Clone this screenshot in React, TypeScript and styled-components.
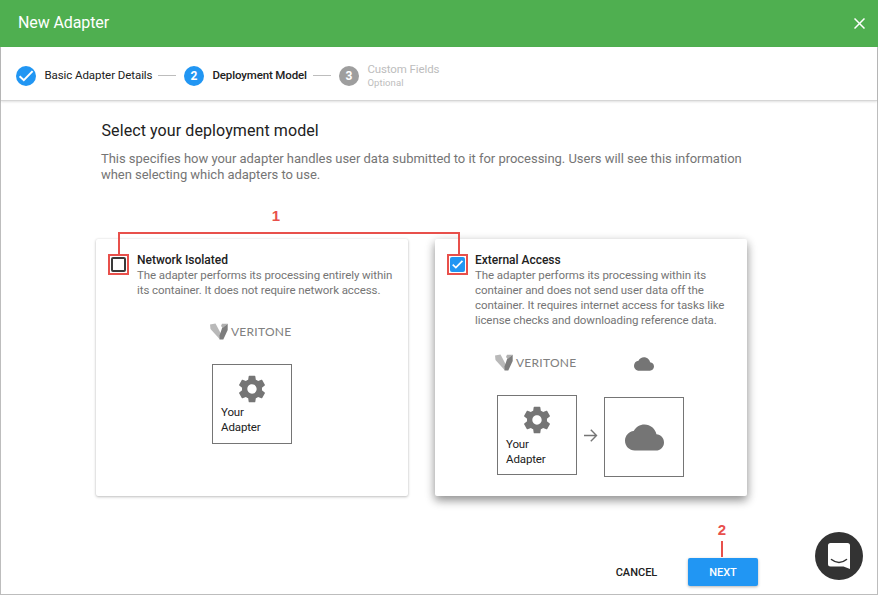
import React from 'react';
import styled, { createGlobalStyle } from 'styled-components';

const GlobalStyle = createGlobalStyle`
  *, *::before, *::after { box-sizing: border-box; }
  body { margin: 0; background: #fff; font-family: Roboto, "Liberation Sans", sans-serif; }
`;

const GREY = '#757575';
const BLUE = '#2196f3';
const RED = '#e8504b';

const Page = styled.div`
  width: 878px;
  height: 595px;
  display: flex;
  flex-direction: column;
  position: relative;
  overflow: hidden;
`;

const Header = styled.header`
  height: 47px;
  flex: none;
  padding: 0 13px 2px 18px;
  display: flex;
  align-items: center;
  justify-content: space-between;
  background: #4faf50;
  color: #fff;
  font-size: 16px;
  letter-spacing: -0.1px;
`;

const CloseButton = styled.button`
  width: 11px;
  height: 11px;
  padding: 0;
  border: 0;
  background: none;
  display: flex;
  margin-top: 2px;
`;

const Body = styled.div`
  flex: 1;
  display: flex;
  flex-direction: column;
  border: 1px solid #bdbdbd;
  border-top: 0;
`;

const Stepper = styled.nav`
  height: 54px;
  flex: none;
  display: flex;
  align-items: center;
  padding: 4px 0 0 15px;
  border-bottom: 1px solid #d6d6d6;
  box-shadow: 0 1px 2px rgba(0, 0, 0, 0.12);
`;

const StepDot = styled.span<{ $muted?: boolean }>`
  width: 20px;
  height: 20px;
  flex: none;
  border-radius: 50%;
  background: ${p => (p.$muted ? '#9e9e9e' : BLUE)};
  color: #fff;
  font-size: 12px;
  font-weight: 700;
  display: flex;
  align-items: center;
  justify-content: center;
`;

const StepLabel = styled.span<{ $w: number; $weight?: number; $ls: number }>`
  width: ${p => p.$w}px;
  margin-left: 8px;
  margin-top: -1px;
  padding-left: 0.4px;
  white-space: nowrap;
  font-size: 11.5px;
  line-height: 14px;
  font-weight: ${p => p.$weight || 400};
  letter-spacing: ${p => p.$ls}px;
  color: #212121;
`;

const StepMuted = styled(StepLabel)`
  color: #bdbdbd;
  margin-top: -1px;
  small { display: block; font-size: 9.5px; line-height: 13px; letter-spacing: 0.1px; }
`;

const StepLine = styled.i`
  width: 18px;
  height: 1px;
  margin: 0 8px 0 6px;
  background: #bdbdbd;
`;

const Main = styled.main`
  flex: 1;
  display: flex;
  flex-direction: column;
  padding: 20px 0 0 95px;
`;

const Title = styled.h1`
  margin: 0 0 0 5.5px;
  font-size: 16px;
  line-height: 20px;
  font-weight: 400;
  letter-spacing: 0.09px;
  color: #212121;
`;

const Intro = styled.p`
  margin: 10px 0 0 5px;
  font-size: 13px;
  line-height: 16px;
  letter-spacing: -0.03px;
  color: ${GREY};
  white-space: nowrap;
`;

const Cards = styled.section`
  margin-top: 56px;
  display: flex;
  gap: 27px;
  position: relative;
`;

const Card = styled.article<{ $raised?: boolean }>`
  width: 312px;
  height: 257px;
  padding: 13px 12px 0;
  background: #fff;
  border-radius: 2px;
  box-shadow: ${p => p.$raised
    ? '0 4px 8px rgba(0,0,0,.3), 0 4px 12px rgba(0,0,0,.2)'
    : '0 1px 3px rgba(0,0,0,.24), 0 0 2px rgba(0,0,0,.1)'};
`;

const CardTop = styled.div<{ $gap: number; $h: number }>`
  display: flex;
  gap: ${p => p.$gap}px;
  height: ${p => p.$h}px;
`;

const CheckFrame = styled.span`
  width: 21px;
  height: 21px;
  flex: none;
  margin-top: 2px;
  border: 2px solid ${RED};
  display: flex;
  align-items: center;
  justify-content: center;
`;

const CheckBox = styled.span<{ $on?: boolean }>`
  width: 15px;
  height: 15px;
  border-radius: 2px;
  border: ${p => (p.$on ? '0' : '2px solid #3a3a3a')};
  background: ${p => (p.$on ? BLUE : '#fff')};
  display: flex;
`;

const CardTitle = styled.h2`
  margin: 1px 0 0;
  font-size: 12px;
  line-height: 15px;
  font-weight: 500;
  letter-spacing: -0.02px;
  color: #212121;
`;

const CardText = styled.p`
  margin: 0;
  font-size: 11.5px;
  line-height: 15px;
  letter-spacing: -0.08px;
  white-space: nowrap;
  color: ${GREY};
`;

const Diagram = styled.div<{ $left: number }>`
  display: flex;
  align-items: flex-start;
  padding-left: ${p => p.$left}px;
`;

const Stack = styled.div<{ $gap: number }>`
  width: 80px;
  display: flex;
  flex-direction: column;
  align-items: center;
  gap: ${p => p.$gap}px;
`;

const Brand = styled.div`
  height: 18px;
  width: 84px;
  display: flex;
  align-items: center;
  gap: 3px;
  padding-bottom: 2px;
  font-family: Lato, sans-serif;
  font-size: 12px;
  letter-spacing: 0.25px;
  color: #808080;
  span { white-space: nowrap; }
  svg { flex: none; }
`;

const Box = styled.div<{ $center?: boolean; $pad?: number }>`
  width: 80px;
  height: 80px;
  border: 1px solid ${GREY};
  display: flex;
  flex-direction: column;
  align-items: center;
  justify-content: ${p => (p.$center ? 'center' : 'flex-start')};
  padding-top: ${p => p.$pad || 0}px;
`;

const BoxLabel = styled.div<{ $top: number }>`
  align-self: flex-start;
  margin: ${p => p.$top}px 0 0 8px;
  font-size: 11.5px;
  line-height: 15px;
  letter-spacing: -0.12px;
  color: #212121;
`;

const ArrowSlot = styled.div`
  width: 27px;
  padding-top: 74px;
  display: flex;
  justify-content: center;
`;

const Actions = styled.footer`
  display: flex;
  justify-content: flex-end;
  align-items: center;
  gap: 30px;
  margin: 62px 119px 0 0;
`;

const Button = styled.button<{ $primary?: boolean }>`
  height: 28px;
  width: ${p => (p.$primary ? 70 : 43)}px;
  padding: 0;
  border: 0;
  border-radius: 2px;
  font: 500 11px Roboto, sans-serif;
  letter-spacing: 0;
  color: ${p => (p.$primary ? '#fff' : '#212121')};
  background: ${p => (p.$primary ? BLUE : 'transparent')};
  box-shadow: ${p => (p.$primary ? '0 1px 3px rgba(0,0,0,.3)' : 'none')};
`;

const Connector = styled.div`
  position: absolute;
  left: 22px;
  top: -7px;
  width: 342px;
  height: 22px;
  border: 2px solid ${RED};
  border-bottom: 0;
`;

const Callout = styled.div<{ $x: number; $y: number }>`
  position: absolute;
  left: ${p => p.$x}px;
  top: ${p => p.$y}px;
  width: 16px;
  text-align: center;
  font: 700 15px/16px "Liberation Sans", sans-serif;
  color: ${RED};
`;

const CalloutStem = styled.div`
  width: 2px;
  height: 16px;
  margin: 3px auto 0;
  background: ${RED};
`;

const Chat = styled.button`
  position: absolute;
  left: 815px;
  top: 532px;
  width: 48px;
  height: 48px;
  padding: 0;
  border: 0;
  background: none;
`;

const Tick = ({ size }: { size: number }) => (
  <svg width={size} height={size} viewBox="0 0 20 20" fill="none" stroke="#fff" strokeWidth={size > 16 ? 2 : 2.2}>
    <path d="M3.6 10.2 L7.8 14.2 L16.6 5.1" />
  </svg>
);

const Gear = () => (
  <svg width="32" height="32" viewBox="0 0 24 24" fill={GREY}>
    <path d="M19.43 12.98c.04-.32.07-.64.07-.98s-.03-.66-.07-.98l2.11-1.65c.19-.15.24-.42.12-.64l-2-3.46c-.12-.22-.39-.3-.61-.22l-2.49 1c-.52-.4-1.08-.73-1.69-.98l-.38-2.65C14.46 2.18 14.25 2 14 2h-4c-.25 0-.46.18-.49.42l-.38 2.65c-.61.25-1.17.59-1.69.98l-2.49-1c-.23-.09-.49 0-.61.22l-2 3.46c-.13.22-.07.49.12.64l2.11 1.65c-.04.32-.07.65-.07.98s.03.66.07.98l-2.11 1.65c-.19.15-.24.42-.12.64l2 3.46c.12.22.39.3.61.22l2.49-1c.52.4 1.08.73 1.69.98l.38 2.65c.03.24.24.42.49.42h4c.25 0 .46-.18.49-.42l.38-2.65c.61-.25 1.17-.59 1.69-.98l2.49 1c.23.09.49 0 .61-.22l2-3.46c.12-.22.07-.49-.12-.64l-2.11-1.65zM12 15.5c-1.93 0-3.5-1.57-3.5-3.5s1.57-3.5 3.5-3.5 3.5 1.57 3.5 3.5-1.57 3.5-3.5 3.5z" />
  </svg>
);

const Cloud = ({ size }: { size: number }) => (
  <svg width={size} height={size} viewBox="0 0 24 24" fill={GREY}>
    <path d="M19.35 10.04C18.67 6.59 15.64 4 12 4 9.11 4 6.6 5.64 5.35 8.04 2.34 8.36 0 10.91 0 14c0 3.31 2.69 6 6 6h13c2.76 0 5-2.24 5-5 0-2.64-2.05-4.78-4.65-4.96z" />
  </svg>
);

const Veritone = () => (
  <Brand>
    <svg width="18" height="17" viewBox="0 0 18 17">
      <path d="M0 1.5 L5.5 0.5 L10.8 10.5 L10 16.5 L0.5 6 Z" fill="#b9b9b9" />
      <path d="M12.3 4.5 L17.7 0.8 V7 L13.3 16.5 H9.6 L9.5 12.5 Z" fill="#7d7d7d" />
      <path d="M12 0.8 H17.7 L12.8 5 L11 3 Z" fill="#b0b0b0" />
    </svg>
    <span>VERITONE</span>
  </Brand>
);

const AdapterBox = ({ pad, labelTop }: { pad: number; labelTop: number }) => (
  <Box $pad={pad}>
    <Gear />
    <BoxLabel $top={labelTop}>Your<br />Adapter</BoxLabel>
  </Box>
);

export default function App() {
  return (
    <Page>
      <GlobalStyle />
      <Header>
        <span>New Adapter</span>
        <CloseButton aria-label="Close">
          <svg width="11" height="11" viewBox="0 0 11 11" stroke="#fff" strokeWidth="1.5">
            <path d="M0.5 0.5 L10.5 10.5 M10.5 0.5 L0.5 10.5" />
          </svg>
        </CloseButton>
      </Header>
      <Body>
        <Stepper>
          <StepDot><Tick size={20} /></StepDot>
          <StepLabel $w={108} $ls={-0.07}>Basic Adapter Details</StepLabel>
          <StepLine />
          <StepDot>2</StepDot>
          <StepLabel $w={95} $weight={500} $ls={-0.13}>Deployment Model</StepLabel>
          <StepLine />
          <StepDot $muted>3</StepDot>
          <StepMuted $w={80} $ls={-0.11}>Custom Fields<small>Optional</small></StepMuted>
        </Stepper>
        <Main>
          <Title>Select your deployment model</Title>
          <Intro>
            This specifies how your adapter handles user data submitted to it for processing. Users will see this information<br />
            when selecting which adapters to use.
          </Intro>
          <Cards>
            <Card>
              <CardTop $gap={8} $h={71}>
                <CheckFrame><CheckBox /></CheckFrame>
                <div>
                  <CardTitle>Network Isolated</CardTitle>
                  <CardText>
                    The adapter performs its processing entirely within<br />
                    its container. It does not require network access.
                  </CardText>
                </div>
              </CardTop>
              <Diagram $left={104}>
                <Stack $gap={23}>
                  <Veritone />
                  <AdapterBox pad={8} labelTop={0} />
                </Stack>
              </Diagram>
            </Card>
            <Card $raised>
              <CardTop $gap={7} $h={102}>
                <CheckFrame><CheckBox $on><Tick size={15} /></CheckBox></CheckFrame>
                <div>
                  <CardTitle>External Access</CardTitle>
                  <CardText>
                    The adapter performs its processing within its<br />
                    container and does not send user data off the<br />
                    container. It requires internet access for tasks like<br />
                    license checks and downloading reference data.
                  </CardText>
                </div>
              </CardTop>
              <Diagram $left={50}>
                <Stack $gap={23}>
                  <Veritone />
                  <AdapterBox pad={8} labelTop={1} />
                </Stack>
                <ArrowSlot>
                  <svg width="14" height="14" viewBox="0 0 14 14" fill="none" stroke={GREY} strokeWidth="1.4">
                    <path d="M0 7.5 H12.5 M6.8 1.7 L12.5 7.5 L6.8 13.3" />
                  </svg>
                </ArrowSlot>
                <Stack $gap={23}>
                  <Cloud size={20} />
                  <Box $center><Cloud size={39} /></Box>
                </Stack>
              </Diagram>
            </Card>
            <Connector />
          </Cards>
          <Actions>
            <Button>CANCEL</Button>
            <Button $primary>NEXT</Button>
          </Actions>
        </Main>
      </Body>
      <Callout $x={268} $y={208}>1</Callout>
      <Callout $x={714} $y={522}>2<CalloutStem /></Callout>
      <Chat aria-label="Open chat">
        <svg width="48" height="48" viewBox="0 0 48 48">
          <circle cx="24" cy="24" r="24" fill="#333" />
          <path d="M15.5 11 H32.5 Q35 11 35 13.5 V37 L28.5 34.5 H15.5 Q13 34.5 13 32 V13.5 Q13 11 15.5 11 Z" fill="#fff" />
          <path d="M16.5 27.5 Q24 33.5 31.5 27.5" fill="none" stroke="#333" strokeWidth="1.6" strokeLinecap="round" />
        </svg>
      </Chat>
    </Page>
  );
}
